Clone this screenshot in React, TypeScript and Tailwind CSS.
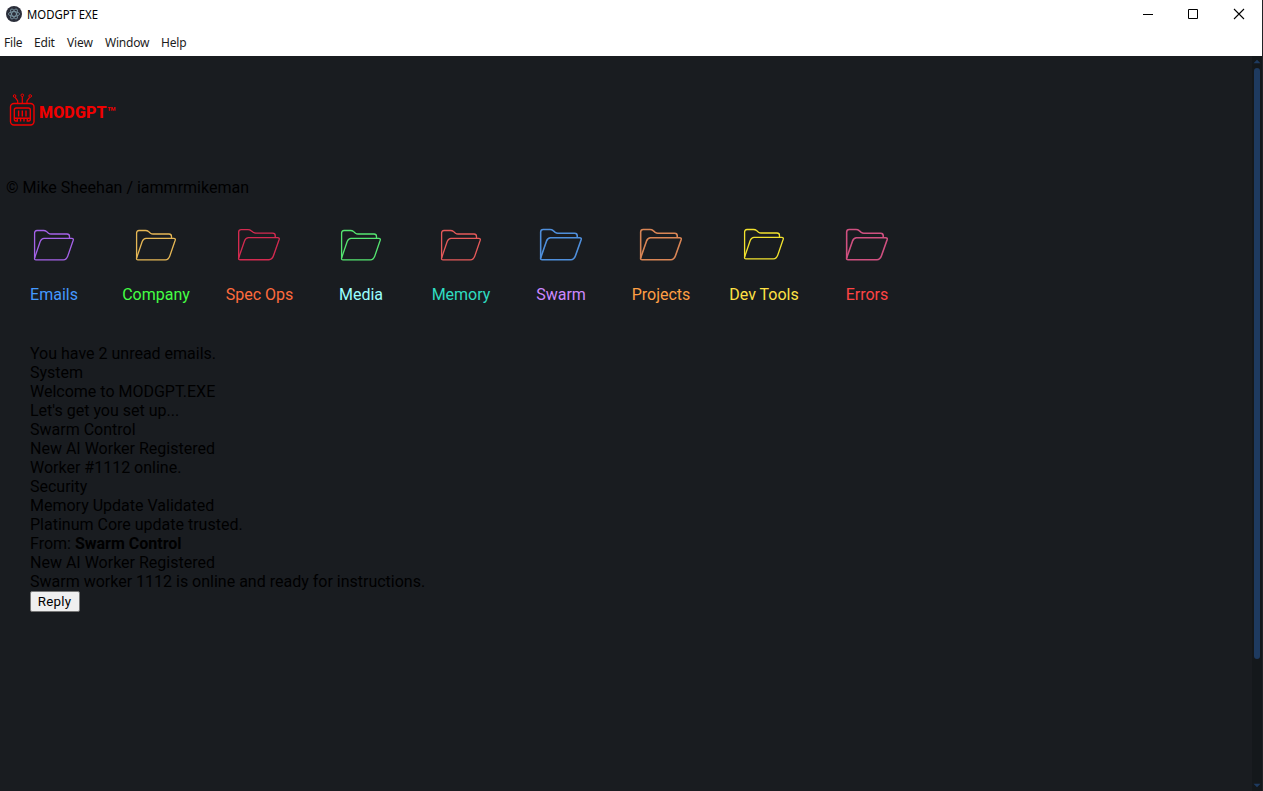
import React from "react";

type Folder = { label: string; cell: string; text: string; stroke: string; icon: string; thick: number };

const folders: Folder[] = [
  { label: "Emails", cell: "w-[100px]", text: "text-[#4499ff]", stroke: "#a562e8", icon: "w-[42px] h-[33px]", thick: 1.3 },
  { label: "Company", cell: "w-[104px]", text: "text-[#44ff44]", stroke: "#e6b755", icon: "w-[42px] h-[33px]", thick: 1.3 },
  { label: "Spec Ops", cell: "w-[103px]", text: "text-[#ff6b3d]", stroke: "#d42a50", icon: "w-[44px] h-[34px] mr-px", thick: 1.3 },
  { label: "Media", cell: "w-[100px]", text: "text-[#99ffff]", stroke: "#55e670", icon: "w-[42px] h-[33px]", thick: 1.3 },
  { label: "Memory", cell: "w-[100px]", text: "text-[#2fdcc0]", stroke: "#e65a5a", icon: "w-[42px] h-[33px]", thick: 1.3 },
  { label: "Swarm", cell: "w-[100px]", text: "text-[#cc88ff]", stroke: "#4f8fdc", icon: "w-[44px] h-[34px]", thick: 1.5 },
  { label: "Projects", cell: "w-[100px]", text: "text-[#ff9f44]", stroke: "#d98555", icon: "w-[44px] h-[34px]", thick: 1.5 },
  { label: "Dev Tools", cell: "w-[106px]", text: "text-[#ffe144]", stroke: "#f2e22e", icon: "w-[42px] h-[33px] mb-0.5", thick: 1.3 },
  { label: "Errors", cell: "w-[100px]", text: "text-[#ff4444]", stroke: "#d05080", icon: "w-[44px] h-[34px]", thick: 1.5 },
];

const lines = [
  "You have 2 unread emails.",
  "System",
  "Welcome to MODGPT.EXE",
  "Let's get you set up...",
  "Swarm Control",
  "New AI Worker Registered",
  "Worker #1112 online.",
  "Security",
  "Memory Update Validated",
  "Platinum Core update trusted.",
];

function FolderIcon({ f }: { f: Folder }) {
  return (
    <svg className={f.icon} viewBox="0 0 42 33" preserveAspectRatio="none" fill="none" stroke={f.stroke} strokeWidth={f.thick} strokeLinejoin="round">
      <path d="M1.6 29V4Q1.6 1.5 4 1.5H10.5Q12.3 1.5 13.5 2.6L15.5 4.2Q16.6 5 18 5H34Q36.5 5 36.5 7.5V9.4" />
      <path d="M1.6 29L7.2 12.5Q8.4 9.4 11 9.4H38.8Q40.8 9.4 40.2 11.3L34.8 27Q33.4 30.8 30.5 30.8H3Q1.2 30.8 1.6 29Z" />
    </svg>
  );
}

function ElectronIcon() {
  return (
    <svg className="h-4 w-4" viewBox="0 0 16 16" fill="none" stroke="#9fc4d0" strokeWidth="0.7">
      <circle cx="8" cy="8" r="8" fill="#2b2e3a" stroke="none" />
      <g opacity="0.85">
        <ellipse cx="8" cy="8" rx="5.6" ry="2.3" />
        <ellipse cx="8" cy="8" rx="5.6" ry="2.3" transform="rotate(60 8 8)" />
        <ellipse cx="8" cy="8" rx="5.6" ry="2.3" transform="rotate(120 8 8)" />
      </g>
    </svg>
  );
}

function Logo() {
  return (
    <div className="ml-[9px] flex h-[34px] w-[120px]">
      <svg className="h-[34px] w-[27px] shrink-0" viewBox="0 0 27 34" fill="none" stroke="#f00000" strokeWidth="1.4">
        <rect x="1.5" y="10.5" width="23.5" height="21.5" rx="3.5" />
        <path d="M8.7 10.5V8L6.2 4.4M13.3 10.5V4M18 10.5V8L20.6 4.4" strokeWidth="1.2" />
        <g strokeWidth="1">
          <circle cx="5.6" cy="3" r="1.3" />
          <circle cx="13.3" cy="2.3" r="1.3" />
          <circle cx="21.2" cy="3" r="1.3" />
        </g>
        <path d="M5.3 26V17Q5.3 15 7.3 15H19.3Q21.3 15 21.3 17V26Q21.3 28 19.8 28H18.3V25.5M5.3 26Q5.3 28 6.8 28H8.3V25.5M11.6 28.5V25.5M15 28.5V25.5M6 25.3H20.5M9.6 17.5V23.5M13.3 17.5V23.5M17 17.5V23.5" />
      </svg>
      <svg className="h-[34px] w-[80px] shrink-0" viewBox="0 0 80 34" fill="#f00000" fontFamily="Roboto, sans-serif">
        <text x="3" y="24.7" fontSize="16" fontWeight="800" textLength="67.5" lengthAdjust="spacing">MODGPT</text>
        <text x="70.5" y="24" fontSize="14" fontWeight="600" textLength="9.5" lengthAdjust="spacingAndGlyphs">™</text>
      </svg>
    </div>
  );
}

export default function App() {
  return (
    <div className="flex h-[791px] w-[1263px] flex-col overflow-hidden bg-[#191c20] font-[Roboto,sans-serif] text-base text-black">
      <header className="h-14 shrink-0 border-r border-[#202226] bg-white font-['Noto_Sans',sans-serif] text-[12px]">
        <div className="flex h-7 items-center pl-1.5">
          <ElectronIcon />
          <svg className="ml-[5px] h-5 w-[80px]" viewBox="0 0 80 20" fill="#000000" fontSize="12">
            <text x="0" y="14.5" textLength="71" lengthAdjust="spacingAndGlyphs">MODGPT EXE</text>
          </svg>
          <svg className="mr-[13px] ml-auto h-3 w-[106px]" viewBox="0 0 106 12" fill="none" stroke="#000000">
            <path d="M0 6.5H10M45.5 1.5H54.5V10.5H45.5Z" />
            <path d="M91 1L101 11M101 1L91 11" strokeWidth="1.1" />
          </svg>
        </div>
        <nav className="flex h-7 items-center gap-3 pt-0.5 pl-1 text-[#1c1c1c]">
          <span className="w-[18px] tracking-[-0.2px]">File</span>
          <span className="w-[21px] tracking-[-0.2px]">Edit</span>
          <span className="w-[26px] tracking-[-0.1px]">View</span>
          <span className="w-11 tracking-[-0.2px]">Window</span>
          <span className="tracking-[-0.2px]">Help</span>
        </nav>
      </header>
      <div className="flex min-h-0 flex-1">
        <main className="min-w-0 flex-1 pt-[37px]">
          <Logo />
          <p className="mt-[51px] pl-1.5 leading-[19px]">© Mike Sheehan / iammrmikeman</p>
          <div className="mt-[31px] flex pl-1">
            {folders.map((f) => (
              <div key={f.label} className={"flex shrink-0 flex-col items-center " + f.cell}>
                <div className="flex h-[34px] items-center">
                  <FolderIcon f={f} />
                </div>
                <span className={"mt-[23px] leading-[19px] whitespace-nowrap " + f.text}>{f.label}</span>
              </div>
            ))}
          </div>
          <section className="mt-10 pl-[30px] leading-[19px]">
            {lines.map((l) => (
              <p key={l}>{l}</p>
            ))}
            <p>From: <b className="font-bold">Swarm Control</b></p>
            <p>New AI Worker Registered</p>
            <p>Swarm worker 1112 is online and ready for instructions.</p>
            <button className="block h-[21px] w-[50px] rounded-[2px] border border-[#767676] bg-[#efefef] pr-px text-[13.33px] leading-[19px] tracking-[0.2px]">Reply</button>
          </section>
        </main>
        <aside className="flex w-[11px] shrink-0 flex-col items-center border-r border-[#202226] bg-[#14181b]">
          <svg className="h-3 w-2" viewBox="0 0 8 12" fill="#1e3a5f"><path d="M0.5 7.2L4 3.8L7.5 7.2Z" /></svg>
          <div className="h-[591px] w-1.5 rounded-full bg-[#1e3a5f]" />
          <svg className="mt-auto h-3 w-2" viewBox="0 0 8 12" fill="#1e3a5f"><path d="M0.5 4.8L4 8.2L7.5 4.8Z" /></svg>
        </aside>
      </div>
    </div>
  );
}
